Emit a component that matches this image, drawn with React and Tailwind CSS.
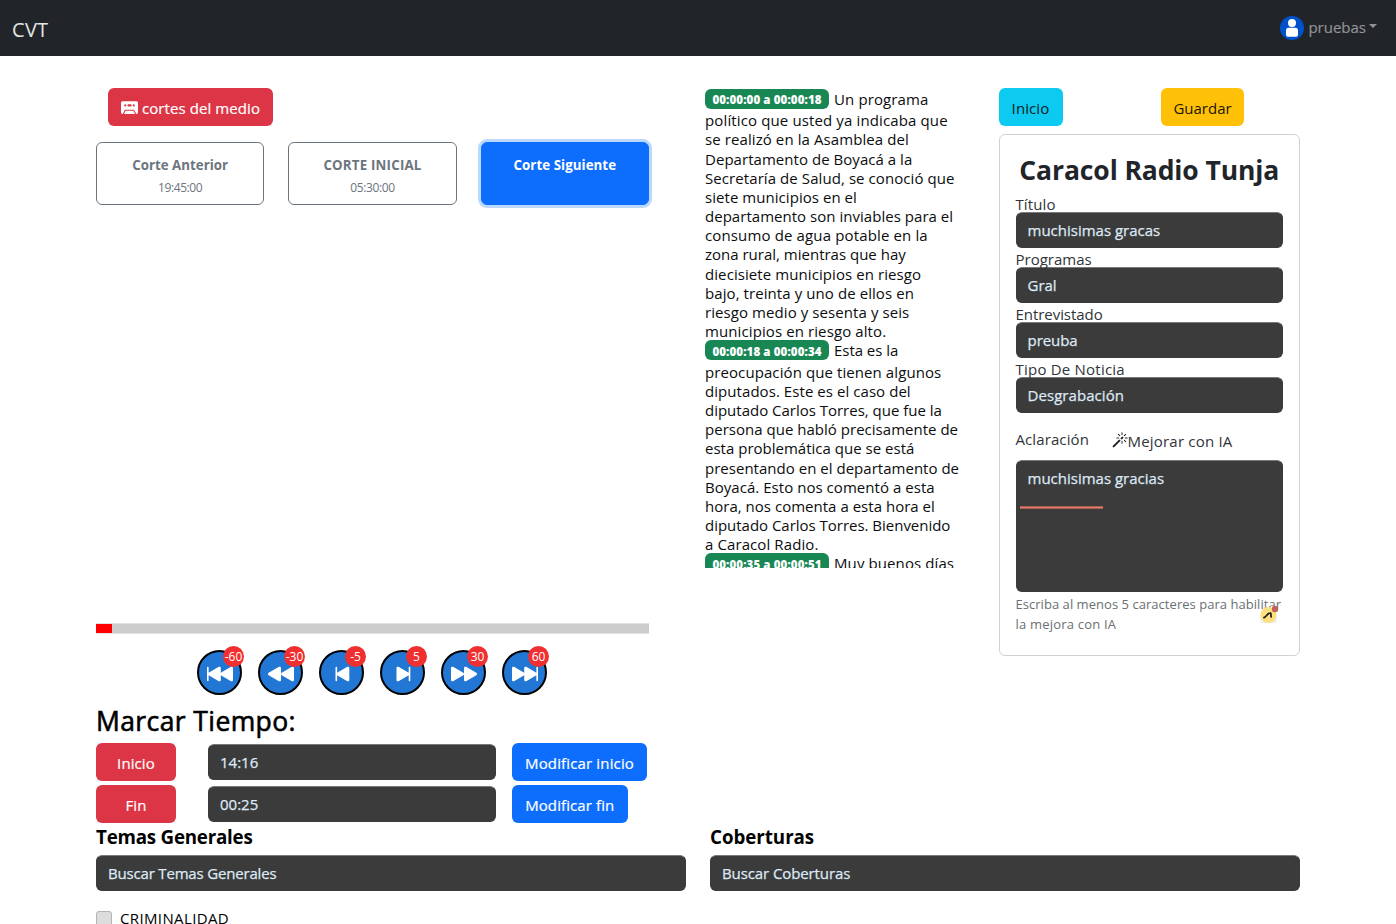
import {
  BsCassetteFill,
  BsMagic,
  BsSkipBackwardFill,
  BsRewindFill,
  BsSkipStartFill,
  BsSkipEndFill,
  BsFastForwardFill,
  BsSkipForwardFill,
} from "react-icons/bs";

const transcript = [
  {
    time: "00:00:00 a 00:00:18",
    lead: "Un programa",
    leadClass: "tracking-[0.12px]",
    lines: [
      ["político que usted ya indicaba que", "tracking-[0.13px]"],
      ["se realizó en la Asamblea del", "tracking-[0.09px]"],
      ["Departamento de Boyacá a la", "tracking-[0.04px]"],
      ["Secretaría de Salud, se conoció que", "tracking-[0.08px]"],
      ["siete municipios en el", "tracking-[0.05px]"],
      ["departamento son inviables para el", "tracking-[0.03px]"],
      ["consumo de agua potable en la", "tracking-[0.14px]"],
      ["zona rural, mientras que hay", "tracking-[0px]"],
      ["diecisiete municipios en riesgo", "tracking-[0.08px]"],
      ["bajo, treinta y uno de ellos en", "tracking-[0.08px]"],
      ["riesgo medio y sesenta y seis", "tracking-[0.08px]"],
      ["municipios en riesgo alto.", "tracking-[0.1px]"],
    ],
  },
  {
    time: "00:00:18 a 00:00:34",
    lead: "Esta es la",
    leadClass: "tracking-[-0.04px]",
    lines: [
      ["preocupación que tienen algunos", "tracking-[0.09px]"],
      ["diputados. Este es el caso del", "tracking-[0.06px]"],
      ["diputado Carlos Torres, que fue la", "tracking-[-0.01px]"],
      ["persona que habló precisamente de", "tracking-[0.02px]"],
      ["esta problemática que se está", "tracking-[0.01px]"],
      ["presentando en el departamento de", "tracking-[0.02px]"],
      ["Boyacá. Esto nos comentó a esta", "tracking-[0.04px]"],
      ["hora, nos comenta a esta hora el", "tracking-[0.02px]"],
      ["diputado Carlos Torres. Bienvenido", "tracking-[-0.02px]"],
      ["a Caracol Radio.", "tracking-[0.1px]"],
    ],
  },
  {
    time: "00:00:35 a 00:00:51",
    lead: "Muy buenos días",
    leadClass: "tracking-[0.1px]",
    lines: [],
  },
];

const jumps = [
  ["-60", BsSkipBackwardFill],
  ["-30", BsRewindFill],
  ["-5", BsSkipStartFill],
  ["5", BsSkipEndFill],
  ["30", BsFastForwardFill],
  ["60", BsSkipForwardFill],
];

const fields = [
  ["Título", "tracking-[0.1px]", "muchisimas gracas", "tracking-[0px]"],
  ["Programas", "tracking-[0px]", "Gral", "tracking-[0px]"],
  ["Entrevistado", "tracking-[-0.05px]", "preuba", "tracking-[-0.05px]"],
  ["Tipo De Noticia", "tracking-[0.22px]", "Desgrabación", "tracking-[0.06px]"],
];

function Navbar() {
  return (
    <nav className="flex h-14 items-center justify-between bg-[#212529] pr-[19px] pl-3">
      <span className="pt-1 text-[20px] leading-7 tracking-[0.3px] text-[#e4e5e5]">CVT</span>
      <div className="flex items-center">
        <svg viewBox="0 0 24 24" className="size-6">
          <circle cx="12" cy="12" r="12" fill="#0052cc" />
          <circle cx="12" cy="7" r="4" fill="#fff" />
          <rect x="6" y="11.8" width="12" height="9" rx="2.6" fill="#fff" />
        </svg>
        <span className="mb-0.5 ml-1 text-[15px] leading-5 text-[#909294] [-webkit-text-stroke:0.2px_#909294]">pruebas</span>
        <span className="mb-1 ml-[3px] border-x-4 border-t-4 border-x-transparent border-t-[#909294]" />
      </div>
    </nav>
  );
}

function DarkBox({ className = "", children }) {
  return (
    <div
      className={
        "flex h-9 items-center rounded-md border border-t-[#7a7a7a] border-x-[#3b3b3b] border-b-[#3b3b3b] bg-[#3b3b3b] px-[11px] pt-px text-[15px] text-[#dee9f5] [-webkit-text-stroke:0.25px_#dee9f5] " +
        className
      }
    >
      {children}
    </div>
  );
}

function Button({ className = "", children }) {
  return (
    <button className={"flex h-[38px] items-center justify-center rounded-md pt-px text-[15px] leading-5 " + className}>
      {children}
    </button>
  );
}

function CutButton({ title, time, titleClass, className }) {
  return (
    <button className={"flex h-[63px] flex-1 flex-col items-center rounded-md pt-3 " + className}>
      <span className={"text-[13.3px] leading-5 font-bold " + titleClass}>{title}</span>
      {time && <span className="mt-[3px] text-[12px] leading-5 tracking-[-0.4px]">{time}</span>}
    </button>
  );
}

function Player() {
  return (
    <section className="w-[553px]">
      <Button className="ml-3 w-[165px] gap-1 bg-[#dc3545] text-white [-webkit-text-stroke:0.2px_white]">
        <BsCassetteFill className="h-[17px] w-[17px] [-webkit-text-stroke:0]" />
        <span className="tracking-[0.09px]">cortes del medio</span>
      </Button>
      <div className="mt-4 flex gap-6">
        <CutButton title="Corte Anterior" time="19:45:00" titleClass="tracking-[0.02px]" className="border border-[#6c757d] text-[#6c757d]" />
        <CutButton title="CORTE INICIAL" time="05:30:00" titleClass="tracking-[0.2px]" className="border border-[#6c757d] text-[#6c757d]" />
        <CutButton title="Corte Siguiente" titleClass="tracking-[0.05px]" className="border border-[#0d6efd] bg-[#0d6efd] text-white ring-[3px] ring-[#bbd8ff]" />
      </div>
      <div className="mt-[418px] h-[11px] border-y border-[#e2e2e2] bg-[#cccccc]">
        <div className="h-full w-4 bg-[#ff0000]" />
      </div>
      <div className="mt-[15.5px] flex justify-center gap-4 pr-px">
        {jumps.map(([label, Icon]) => (
          <div key={label} className="relative flex size-[45px] items-center justify-center rounded-full border-2 border-black bg-[#2277d4] pt-1 text-white">
            <Icon className="size-[26px]" />
            <span className="absolute -top-1.5 -right-1 flex size-[21px] items-center justify-center rounded-full bg-[#f03030] pt-0.5 text-[12px] leading-none">
              {label}
            </span>
          </div>
        ))}
      </div>
    </section>
  );
}

function Transcript() {
  return (
    <section className="h-[480px] w-[258px] overflow-hidden text-[15px] leading-[19.2px] whitespace-nowrap text-[#0c0d0e]">
      {transcript.map((part) => (
        <div key={part.time}>
          <div className="flex h-[21.25px] items-start">
            <span className="mt-[0.7px] flex h-5 w-[124px] items-center justify-center rounded-md bg-[#198754] pt-[3px] text-[11.5px] leading-none font-extrabold tracking-[0.1px] text-white">
              {part.time}
            </span>
            <span className={"ml-[5px] pt-[1.7px] " + part.leadClass}>{part.lead}</span>
          </div>
          {part.lines.map(([text, cls]) => (
            <div key={text} className="h-[19.2px] pt-[1.9px]">
              <span className={cls}>{text}</span>
            </div>
          ))}
        </div>
      ))}
    </section>
  );
}

function NewsForm() {
  return (
    <section className="w-[301.5px]">
      <div className="flex">
        <Button className="w-16 bg-[#0dcaf0] text-[#06181c]">
          <span className="tracking-[0.1px]">Inicio</span>
        </Button>
        <Button className="ml-[98.5px] w-[83px] bg-[#ffc107] text-[#1c1500]">Guardar</Button>
      </div>
      <div className="mt-2 h-[522px] rounded-md border border-[#d0d1d2] px-4 pt-[18px] text-[#303438]">
        <h3 className="text-center text-[26.5px] leading-[34px] font-bold tracking-[-0.1px] whitespace-nowrap text-[#212529]">
          Caracol Radio Tunja
        </h3>
        <div className="mt-[7px]">
          {fields.map(([label, labelClass, value, valueClass]) => (
            <div key={label} className="h-[55px]">
              <div className="h-[18px] pt-px text-[15px] leading-[19px]">
                <span className={labelClass}>{label}</span>
              </div>
              <DarkBox>
                <span className={valueClass}>{value}</span>
              </DarkBox>
            </div>
          ))}
        </div>
        <div className="mt-[15px] flex h-[30.5px] items-start text-[15px] leading-5">
          <span className="w-24 tracking-[0.1px]">Aclaración</span>
          <BsMagic className="mt-[3px] size-4 text-[#212529]" />
          <span className="pt-0.5 tracking-[0.2px]">Mejorar con IA</span>
        </div>
        <div className="relative h-[132px] rounded-md border border-t-[#7a7a7a] border-x-[#3b3b3b] border-b-[#3b3b3b] bg-[#3b3b3b] px-[11px] pt-[7px] text-[15px] leading-5 text-[#dee9f5] [-webkit-text-stroke:0.25px_#dee9f5]">
          muchisimas gracias
          <div className="absolute top-[45px] left-[3px] h-[3px] w-[83px] border-y border-[#a85f53] bg-[#e5796a]" />
        </div>
        <div className="relative pt-[2px] text-[13px] leading-5 whitespace-nowrap text-[#6b6f73]">
          <div className="tracking-[0.04px]">Escriba al menos 5 caracteres para habilitar</div>
          <div className="tracking-[0.2px]">la mejora con IA</div>
          <svg viewBox="0 0 19 19" className="absolute top-[13px] left-[244px] size-[19px]">
            <rect x="0.5" y="10" width="16" height="8" fill="#eceef2" />
            <circle cx="8.5" cy="10" r="8" fill="#fcdf7f" />
            <path d="M4 12.600c1.800-.8 3-2.900 4.600-4.100l2.100-.5.5 4" fill="none" stroke="#1b1b1b" strokeWidth="1.700" strokeLinecap="round" strokeLinejoin="round" />
            <circle cx="15" cy="4" r="3.200" fill="#c4605a" />
          </svg>
        </div>
      </div>
    </section>
  );
}

function TimeRow({ label, value, action, actionClass }) {
  return (
    <div className="flex h-[42px] items-start">
      <Button className="w-20 bg-[#dc3545] text-white [-webkit-text-stroke:0.2px_white]">
        <span className="tracking-[0.1px]">{label}</span>
      </Button>
      <DarkBox className="mt-px ml-8 w-72">{value}</DarkBox>
      <Button className={"ml-4 bg-[#0d6efd] text-white [-webkit-text-stroke:0.2px_white] " + actionClass}>{action}</Button>
    </div>
  );
}

export default function App() {
  return (
    <div className="h-[924px] overflow-hidden bg-white font-['Open_Sans','Noto_Sans',sans-serif] text-black">
      <Navbar />
      <main className="pr-24 pl-24">
        <div className="flex h-[648px] items-start pt-8">
          <Player />
          <div className="ml-14">
            <Transcript />
          </div>
          <div className="ml-[35.5px]">
            <NewsForm />
          </div>
        </div>
        <h3 className="text-[26.5px] leading-[34px] tracking-[0.4px] [-webkit-text-stroke:0.6px_black]">Marcar Tiempo:</h3>
        <div className="mt-[5px]">
          <TimeRow label="Inicio" value="14:16" action="Modificar inicio" actionClass="w-[135px] tracking-[0.15px]" />
          <TimeRow label="Fin" value="00:25" action="Modificar fin" actionClass="w-[115.5px] tracking-[0.1px]" />
        </div>
        <div className="grid grid-cols-2 gap-6">
          <div>
            <h5 className="mb-2 text-[18.75px] leading-5 font-bold tracking-[-0.22px]">Temas Generales</h5>
            <DarkBox>
              <span className="tracking-[-0.18px]">Buscar Temas Generales</span>
            </DarkBox>
            <div className="mt-[17px] flex items-start gap-2">
              <span className="mt-[3px] size-4 rounded-[3px] border border-[#b5b5b5] bg-[#dddddd]" />
              <span className="text-[15px] leading-5 tracking-[0.37px]">CRIMINALIDAD</span>
            </div>
          </div>
          <div>
            <h5 className="mb-2 text-[18.75px] leading-5 font-bold tracking-[-0.05px]">Coberturas</h5>
            <DarkBox>
              <span className="tracking-[-0.1px]">Buscar Coberturas</span>
            </DarkBox>
          </div>
        </div>
      </main>
    </div>
  );
}
